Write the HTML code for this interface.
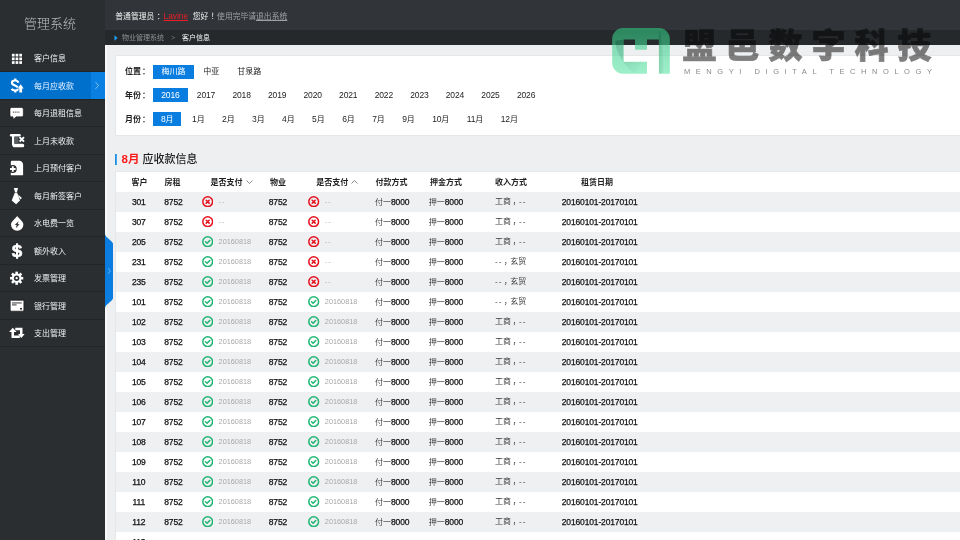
<!DOCTYPE html>
<html lang="zh-CN">
<head>
<meta charset="utf-8">
<title>管理系统</title>
<style>
*{box-sizing:border-box;margin:0;padding:0}
html,body{width:960px;height:540px;overflow:hidden;background:#eeeff1}
#side,#top,#crumb,#filter,#ttl,#tbl,#wm{will-change:transform}
body{font-family:"Liberation Sans","Noto Sans CJK SC",sans-serif;font-size:8px;color:#222;position:relative}
#edge{position:absolute;left:105px;top:45px;width:2px;height:495px;background:#f8f8f9}
#side{position:absolute;left:0;top:0;width:105px;height:540px;background:#2a2e31}
#side h1{position:absolute;left:0;top:0;width:100px;height:45px;line-height:47px;text-align:center;font-size:13px;font-weight:300;color:#b9bdc0}
#menu{position:absolute;left:0;top:44.600px;width:105px;list-style:none}
#menu li{height:27.500px;position:relative;border-bottom:1px solid #222528;color:#f0f0f0;font-size:8px;line-height:28px;padding-left:34px;white-space:nowrap}
#menu li svg.mi{position:absolute;left:0;top:0;width:34px;height:27.500px;fill:#fff}
#menu li svg.ar{position:absolute;left:94.300px;top:8.900px;width:6px;height:9px;z-index:2}
#menu li:nth-child(even){line-height:29.400px}
#menu li:nth-child(even) svg.mi{transform:translateY(.8px)}
#menu li.on{background:#0070cd;color:#e8f3ff}
#menu li.on i{position:absolute;right:0;top:0;width:14.500px;height:26.500px;background:#0a80e2}
#top{position:absolute;left:105px;top:0;width:855px;height:30px;background:#313539;color:#f2f2f2;line-height:32px;padding-left:10.300px;font-size:7.800px;white-space:nowrap}
#top b{font-weight:400}
.pc{position:relative;left:2.500px}
#top .u{color:#ee1c24;text-decoration:underline;text-decoration-thickness:.6px;text-underline-offset:1px;margin:0 2.500px 0 1.500px;font-size:8.300px}
#top .m{color:#9ea2a5;margin-left:1px}
#top .m a{text-decoration:underline;text-decoration-thickness:.6px;text-underline-offset:1px;color:#9ea2a5}
#crumb{position:absolute;left:105px;top:30px;width:855px;height:15px;background:#26292c;color:#8d9194;font-size:7px;line-height:16px;padding-left:17px;white-space:nowrap}
#crumb svg{position:absolute;left:9px;top:5px;width:4px;height:6px}
#crumb .s{margin:0 7px;color:#777b7e}
#crumb .c{color:#f4f4f4}
#filter{position:absolute;left:115px;top:55px;width:860px;height:81px;background:#fff;border:1px solid #e6e7e9}
.frow{position:absolute;left:9px;height:14px;line-height:14.500px;white-space:nowrap;font-size:8px}
.frow label{display:inline-block;width:28.300px;font-weight:700;color:#222}
.frow span{display:inline-block;height:14px;padding:0 8.250px;margin-right:1.300px;color:#1c1c1c}
.frow.yr span{padding:0 8px;margin-right:1.260px}
.frow.mo span{padding:0 7.600px;margin-right:2.250px}
.frow span.on{background:#0a7de0;color:#fff}
.frow i{font-style:normal;font-size:8.500px;letter-spacing:-.15px}
.frow.mo span.on{margin-right:3.400px}
#ttl{position:absolute;left:115px;top:153px;height:13px;padding-left:6.600px;font-size:11px;line-height:12.500px;color:#222;font-weight:500;white-space:nowrap}
#ttl:before{content:"";position:absolute;left:0;top:1px;width:2px;height:10.500px;background:linear-gradient(90deg,#1a8fe8 0,#1a8fe8 60%,#8cc6f2 100%)}
#ttl em{font-style:normal;font-weight:700;color:#fb1a1a;margin-right:3px;font-size:11.500px}
#tbl{position:absolute;left:115px;top:171px;width:860px;height:400px;background:#fff;border:1px solid #e6e7e9}
.th,.tr{position:absolute;left:0;width:860px;height:20px;line-height:20.800px;white-space:nowrap;font-size:8px}
.th{top:0;font-weight:700;color:#222;line-height:21.200px}
.tr{color:#1a1a1a}
.tr.g{background:#eff0f2}
.th span,.tr span{position:absolute;top:0}
.tr i{font-style:normal;font-size:8.500px;letter-spacing:-.15px;color:#111;-webkit-text-stroke:.25px #111}
.tr i.d{font-size:8px;letter-spacing:1px;color:inherit;-webkit-text-stroke:0}
.tr em{font-style:normal;position:relative;left:1.500px}
.c1{left:0;width:45.500px;text-align:center}
.c2{left:40.400px;width:34px;text-align:center}
.c4{left:144.900px;width:34px;text-align:center}
.c3{left:86px}
.c5{left:192.250px}
.c6{left:259px}.c7{left:312.750px}.c8{left:379px}
.c9{left:429.750px;width:108px;text-align:center}
.th .c1{width:46.800px}
.th .c2{left:40.500px;width:32px}
.th .c4{left:145.900px;width:32px}
.th .c3{left:94.500px}.th .c5{left:200.250px}
.th .c6{left:259.500px}.th .c7{left:314px}.th .c8{left:379px}
.th .c9{left:427.100px}
.ic{position:absolute;left:-.1px;top:3.800px;width:11.400px;height:11.400px}
.dt{left:16.600px;color:#a8a8a8;font-size:7.300px}
.dt.no{letter-spacing:1px;color:#b0b0b0}
.tr .c6,.tr .c7,.tr .c8{color:#3c3c3c}
.chev{display:inline-block;width:7px;height:4px;margin-left:3.750px;vertical-align:1px}
.th .c5 .chev{margin-left:3px}
#handle{position:absolute;left:104.500px;top:233.500px;width:8.500px;height:74px}
#wm{position:absolute;left:0;top:0;width:960px;height:100px;pointer-events:none}
#logo{position:absolute;left:612px;top:28.300px;width:58px;height:45.700px;opacity:.62}
#wmc{position:absolute;left:682.500px;top:23px;font-weight:900;font-size:34px;line-height:46px;letter-spacing:9px;color:#000;opacity:.5;-webkit-text-stroke:.7px #000;white-space:nowrap}
#wme{position:absolute;left:684px;top:66px;font-size:7.500px;line-height:11px;letter-spacing:5.560px;color:#8a8a8a;white-space:nowrap}
</style>
</head>
<body>
<div id="edge"></div>
<div id="side">
<h1>管理系统</h1>
<ul id="menu">
<li><svg class="mi" viewBox="0 0 34 27.500"><rect x="11.9" y="8.8" width="2.7" height="2.7"/><rect x="15.6" y="8.8" width="2.7" height="2.7"/><rect x="19.3" y="8.8" width="2.7" height="2.7"/><rect x="11.9" y="12.5" width="2.7" height="2.7"/><rect x="15.6" y="12.5" width="2.7" height="2.7"/><rect x="19.3" y="12.5" width="2.7" height="2.7"/><rect x="11.9" y="16.2" width="2.7" height="2.7"/><rect x="15.6" y="16.2" width="2.7" height="2.7"/><rect x="19.3" y="16.2" width="2.7" height="2.7"/></svg>客户信息</li>
<li class="on"><svg class="mi" viewBox="0 0 34 27.500"><g fill="none" stroke="#fff" stroke-width="2.200"><path d="M15.3 5.700V8"/><path d="M18.400 9.800C17.700 8.200 16.600 7.700 15 7.700C13 7.700 11.900 8.600 11.900 10C11.900 11.400 13 12 15 12.700C16.500 13.300 17.400 13.800 17.800 14.600"/><path d="M11.500 16.100C12.400 17.400 13.600 17.700 15 17.700C16.500 17.700 17.500 17.300 18.200 16.300"/><path d="M15.300 17.700V19.700"/></g><path d="M20.700 11.400L23.700 15.600H22.100V19.700H19.300V15.600H17.700Z"/></svg>每月应收款<i></i><svg class="ar" viewBox="0 0 8 12"><path d="M2 1.500L6 6L2 10.500" fill="none" stroke="#a9d3f7" stroke-width="1"/></svg></li>
<li><svg class="mi" viewBox="0 0 34 27.500"><path d="M11.600 7.500H21.700A1.600 1.600 0 0 1 23.300 9.100V15.200A1.600 1.600 0 0 1 21.700 16.800H16.300L13.400 19.200L12.900 16.800H11.600A1.600 1.600 0 0 1 10 15.200V9.100A1.600 1.600 0 0 1 11.600 7.500Z" stroke="#15181a" stroke-width=".6"/><g fill="#777"><rect x="12.900" y="11.400" width="1.100" height="1.500"/><rect x="14.700" y="11.400" width="1.100" height="1.500"/><rect x="16.500" y="11.400" width="1.100" height="1.500"/><rect x="18.300" y="11.400" width="1.100" height="1.500"/></g></svg>每月退租信息</li>
<li><svg class="mi" viewBox="0 0 34 27.500"><g><rect x="9.900" y="6.300" width="10.800" height="2.500" rx="1.250"/><rect x="12" y="6.300" width="2.300" height="11.500"/><rect x="12.600" y="15.900" width="11.600" height="3.500" rx="1.500"/><rect x="14.700" y="9.100" width="3.800" height="6.500" fill="#5a5d60"/><path d="M19.600 9.300L24 13.900M24 9.300L19.600 13.900" stroke="#fff" stroke-width="1.900" fill="none"/></g></svg>上月未收款</li>
<li><svg class="mi" viewBox="0 0 34 27.500"><path d="M12 5.700H19.600Q23.100 6.400 23.100 10V20.200H10.800V6.900Q10.800 5.700 12 5.700Z"/><circle cx="12.800" cy="14" r="3.900" fill="#2a2e31"/><path d="M10 14H15.600M12.800 11.200V16.800" stroke="#fff" stroke-width="1.900" fill="none"/></svg>上月预付客户</li>
<li><svg class="mi" viewBox="0 0 34 27.500"><path d="M13.800 5.300H18L17 9.300H15Z"/><path d="M14.900 9.700H17.100L20 17.600L16.100 21.500L11.700 17.600Z"/><path d="M18 11.600L21.900 15.200L20.600 16.700L18.900 14.300Z"/></svg>每月新签客户</li>
<li><svg class="mi" viewBox="0 0 34 27.500"><path d="M17.200 6C19 8.600 23.400 11.600 23.400 14.600A6.200 6.200 0 0 1 11 14.600C11 11.600 15.400 8.600 17.200 6Z"/><path d="M18.600 11.200L14.800 14.900H16.700L15.800 18.300L19.600 14.200H17.600Z" fill="#2a2e31"/></svg>水电费一览</li>
<li><svg class="mi" viewBox="0 0 34 27.500"><text x="17.050" y="19.500" style="font:700 16.700px 'Liberation Sans',sans-serif" text-anchor="middle" stroke="#fff" stroke-width=".5">S</text><rect x="16" y="5.500" width="2.100" height="15.500"/></svg>额外收入</li>
<li><svg class="mi" viewBox="0 0 34 27.500"><g transform="translate(16.650 13.200)"><circle r="4.800"/><rect x="-1.300" y="-6.600" width="2.600" height="3.200" transform="rotate(0)"/><rect x="-1.300" y="-6.600" width="2.600" height="3.200" transform="rotate(45)"/><rect x="-1.300" y="-6.600" width="2.600" height="3.200" transform="rotate(90)"/><rect x="-1.300" y="-6.600" width="2.600" height="3.200" transform="rotate(135)"/><rect x="-1.300" y="-6.600" width="2.600" height="3.200" transform="rotate(180)"/><rect x="-1.300" y="-6.600" width="2.600" height="3.200" transform="rotate(225)"/><rect x="-1.300" y="-6.600" width="2.600" height="3.200" transform="rotate(270)"/><rect x="-1.300" y="-6.600" width="2.600" height="3.200" transform="rotate(315)"/><circle r="2.700" fill="#2a2e31"/><circle r="1.150"/></g></svg>发票管理</li>
<li><svg class="mi" viewBox="0 0 34 27.500"><rect x="10.200" y="7.500" width="13.700" height="10.900" rx="1.200" stroke="#15181a" stroke-width=".7"/><rect x="12" y="9.700" width="9.700" height=".9" fill="#222"/><rect x="12" y="11.300" width="4.600" height="1.500" fill="#777"/><circle cx="21" cy="15.900" r="1" fill="#222"/></svg>银行管理</li>
<li><svg class="mi" viewBox="0 0 34 27.500"><path d="M12.800 7.800L16.500 12H14V15.600H19.800V18.100H11.500V12H9.100Z"/><path d="M21.300 18.100L18 14H20V10.300H15.300V7.800H22.500V14H24.700Z"/></svg>支出管理</li>
</ul>
</div>
<div id="top"><b>普通管理员<span class="pc">：</span></b><span class="u">Lavine</span> <b>您好<span class="pc">！</span></b><span class="m">使用完毕请<a>退出系统</a></span></div>
<div id="crumb"><svg viewBox="0 0 4 6"><path d="M.5 .3L3.600 3L.5 5.700Z" fill="#1aa3ff"/></svg>物业管理系统<span class="s">&gt;</span><span class="c">客户信息</span></div>
<div id="filter">
<div class="frow" style="top:9px"><label>位置<span class="pc" style="padding:0;margin:0;left:1px">：</span></label><span class="on">梅川路</span><span>中亚</span><span>甘泉路</span></div>
<div class="frow yr" style="top:32px"><label>年份<span class="pc" style="padding:0;margin:0;left:1px">：</span></label><span class="on"><i>2016</i></span><span><i>2017</i></span><span><i>2018</i></span><span><i>2019</i></span><span><i>2020</i></span><span><i>2021</i></span><span><i>2022</i></span><span><i>2023</i></span><span><i>2024</i></span><span><i>2025</i></span><span><i>2026</i></span></div>
<div class="frow mo" style="top:56px"><label>月份<span class="pc" style="padding:0;margin:0;left:1px">：</span></label><span class="on"><i>8</i>月</span><span><i>1</i>月</span><span><i>2</i>月</span><span><i>3</i>月</span><span><i>4</i>月</span><span><i>5</i>月</span><span><i>6</i>月</span><span><i>7</i>月</span><span><i>9</i>月</span><span><i>10</i>月</span><span><i>11</i>月</span><span><i>12</i>月</span></div>
</div>
<div id="ttl"><em>8月</em>应收款信息</div>
<div id="tbl">
<div class="th"><span class="c1">客户</span><span class="c2">房租</span><span class="c3">是否支付<svg class="chev" viewBox="0 0 14 8"><path d="M1 1l6 6 6-6" fill="none" stroke="#555" stroke-width="1.400"/></svg></span><span class="c4">物业</span><span class="c5">是否支付<svg class="chev" viewBox="0 0 14 8"><path d="M1 7l6-6 6 6" fill="none" stroke="#555" stroke-width="1.400"/></svg></span><span class="c6">付款方式</span><span class="c7">押金方式</span><span class="c8">收入方式</span><span class="c9">租赁日期</span></div>
<div style="top:20px" class="tr g"><span class="c1"><i>301</i></span><span class="c2"><i>8752</i></span><span class="c3"><svg class="ic" viewBox="0 0 21 21"><circle cx="10.5" cy="10.5" r="9" fill="none" stroke="#e6121f" stroke-width="2.800"/><path d="M7.800 7.800l5.400 5.400M13.200 7.800l-5.400 5.400" fill="none" stroke="#e6121f" stroke-width="2.900" stroke-linecap="round"/></svg><span class="dt no">--</span></span><span class="c4"><i>8752</i></span><span class="c5"><svg class="ic" viewBox="0 0 21 21"><circle cx="10.5" cy="10.5" r="9" fill="none" stroke="#e6121f" stroke-width="2.800"/><path d="M7.800 7.800l5.400 5.400M13.200 7.800l-5.400 5.400" fill="none" stroke="#e6121f" stroke-width="2.900" stroke-linecap="round"/></svg><span class="dt no">--</span></span><span class="c6">付一<i>8000</i></span><span class="c7">押一<i>8000</i></span><span class="c8">工商<em>，</em><i class="d">--</i></span><span class="c9"><i>20160101-20170101</i></span></div>
<div style="top:40px" class="tr"><span class="c1"><i>307</i></span><span class="c2"><i>8752</i></span><span class="c3"><svg class="ic" viewBox="0 0 21 21"><circle cx="10.5" cy="10.5" r="9" fill="none" stroke="#e6121f" stroke-width="2.800"/><path d="M7.800 7.800l5.400 5.400M13.200 7.800l-5.400 5.400" fill="none" stroke="#e6121f" stroke-width="2.900" stroke-linecap="round"/></svg><span class="dt no">--</span></span><span class="c4"><i>8752</i></span><span class="c5"><svg class="ic" viewBox="0 0 21 21"><circle cx="10.5" cy="10.5" r="9" fill="none" stroke="#e6121f" stroke-width="2.800"/><path d="M7.800 7.800l5.400 5.400M13.200 7.800l-5.400 5.400" fill="none" stroke="#e6121f" stroke-width="2.900" stroke-linecap="round"/></svg><span class="dt no">--</span></span><span class="c6">付一<i>8000</i></span><span class="c7">押一<i>8000</i></span><span class="c8">工商<em>，</em><i class="d">--</i></span><span class="c9"><i>20160101-20170101</i></span></div>
<div style="top:60px" class="tr g"><span class="c1"><i>205</i></span><span class="c2"><i>8752</i></span><span class="c3"><svg class="ic" viewBox="0 0 21 21"><circle cx="10.5" cy="10.5" r="9" fill="none" stroke="#21b573" stroke-width="2.800"/><path d="M6.500 10.700l2.900 2.700 4.900-5.100" fill="none" stroke="#21b573" stroke-width="2.800" stroke-linecap="round" stroke-linejoin="round"/></svg><span class="dt">20160818</span></span><span class="c4"><i>8752</i></span><span class="c5"><svg class="ic" viewBox="0 0 21 21"><circle cx="10.5" cy="10.5" r="9" fill="none" stroke="#e6121f" stroke-width="2.800"/><path d="M7.800 7.800l5.400 5.400M13.200 7.800l-5.400 5.400" fill="none" stroke="#e6121f" stroke-width="2.900" stroke-linecap="round"/></svg><span class="dt no">--</span></span><span class="c6">付一<i>8000</i></span><span class="c7">押一<i>8000</i></span><span class="c8">工商<em>，</em><i class="d">--</i></span><span class="c9"><i>20160101-20170101</i></span></div>
<div style="top:80px" class="tr"><span class="c1"><i>231</i></span><span class="c2"><i>8752</i></span><span class="c3"><svg class="ic" viewBox="0 0 21 21"><circle cx="10.5" cy="10.5" r="9" fill="none" stroke="#21b573" stroke-width="2.800"/><path d="M6.500 10.700l2.900 2.700 4.900-5.100" fill="none" stroke="#21b573" stroke-width="2.800" stroke-linecap="round" stroke-linejoin="round"/></svg><span class="dt">20160818</span></span><span class="c4"><i>8752</i></span><span class="c5"><svg class="ic" viewBox="0 0 21 21"><circle cx="10.5" cy="10.5" r="9" fill="none" stroke="#e6121f" stroke-width="2.800"/><path d="M7.800 7.800l5.400 5.400M13.200 7.800l-5.400 5.400" fill="none" stroke="#e6121f" stroke-width="2.900" stroke-linecap="round"/></svg><span class="dt no">--</span></span><span class="c6">付一<i>8000</i></span><span class="c7">押一<i>8000</i></span><span class="c8"><i class="d">--</i><em>，</em>玄贸</span><span class="c9"><i>20160101-20170101</i></span></div>
<div style="top:100px" class="tr g"><span class="c1"><i>235</i></span><span class="c2"><i>8752</i></span><span class="c3"><svg class="ic" viewBox="0 0 21 21"><circle cx="10.5" cy="10.5" r="9" fill="none" stroke="#21b573" stroke-width="2.800"/><path d="M6.500 10.700l2.900 2.700 4.900-5.100" fill="none" stroke="#21b573" stroke-width="2.800" stroke-linecap="round" stroke-linejoin="round"/></svg><span class="dt">20160818</span></span><span class="c4"><i>8752</i></span><span class="c5"><svg class="ic" viewBox="0 0 21 21"><circle cx="10.5" cy="10.5" r="9" fill="none" stroke="#e6121f" stroke-width="2.800"/><path d="M7.800 7.800l5.400 5.400M13.200 7.800l-5.400 5.400" fill="none" stroke="#e6121f" stroke-width="2.900" stroke-linecap="round"/></svg><span class="dt no">--</span></span><span class="c6">付一<i>8000</i></span><span class="c7">押一<i>8000</i></span><span class="c8"><i class="d">--</i><em>，</em>玄贸</span><span class="c9"><i>20160101-20170101</i></span></div>
<div style="top:120px" class="tr"><span class="c1"><i>101</i></span><span class="c2"><i>8752</i></span><span class="c3"><svg class="ic" viewBox="0 0 21 21"><circle cx="10.5" cy="10.5" r="9" fill="none" stroke="#21b573" stroke-width="2.800"/><path d="M6.500 10.700l2.900 2.700 4.900-5.100" fill="none" stroke="#21b573" stroke-width="2.800" stroke-linecap="round" stroke-linejoin="round"/></svg><span class="dt">20160818</span></span><span class="c4"><i>8752</i></span><span class="c5"><svg class="ic" viewBox="0 0 21 21"><circle cx="10.5" cy="10.5" r="9" fill="none" stroke="#21b573" stroke-width="2.800"/><path d="M6.500 10.700l2.900 2.700 4.900-5.100" fill="none" stroke="#21b573" stroke-width="2.800" stroke-linecap="round" stroke-linejoin="round"/></svg><span class="dt">20160818</span></span><span class="c6">付一<i>8000</i></span><span class="c7">押一<i>8000</i></span><span class="c8"><i class="d">--</i><em>，</em>玄贸</span><span class="c9"><i>20160101-20170101</i></span></div>
<div style="top:140px" class="tr g"><span class="c1"><i>102</i></span><span class="c2"><i>8752</i></span><span class="c3"><svg class="ic" viewBox="0 0 21 21"><circle cx="10.5" cy="10.5" r="9" fill="none" stroke="#21b573" stroke-width="2.800"/><path d="M6.500 10.700l2.900 2.700 4.900-5.100" fill="none" stroke="#21b573" stroke-width="2.800" stroke-linecap="round" stroke-linejoin="round"/></svg><span class="dt">20160818</span></span><span class="c4"><i>8752</i></span><span class="c5"><svg class="ic" viewBox="0 0 21 21"><circle cx="10.5" cy="10.5" r="9" fill="none" stroke="#21b573" stroke-width="2.800"/><path d="M6.500 10.700l2.900 2.700 4.900-5.100" fill="none" stroke="#21b573" stroke-width="2.800" stroke-linecap="round" stroke-linejoin="round"/></svg><span class="dt">20160818</span></span><span class="c6">付一<i>8000</i></span><span class="c7">押一<i>8000</i></span><span class="c8">工商<em>，</em><i class="d">--</i></span><span class="c9"><i>20160101-20170101</i></span></div>
<div style="top:160px" class="tr"><span class="c1"><i>103</i></span><span class="c2"><i>8752</i></span><span class="c3"><svg class="ic" viewBox="0 0 21 21"><circle cx="10.5" cy="10.5" r="9" fill="none" stroke="#21b573" stroke-width="2.800"/><path d="M6.500 10.700l2.900 2.700 4.900-5.100" fill="none" stroke="#21b573" stroke-width="2.800" stroke-linecap="round" stroke-linejoin="round"/></svg><span class="dt">20160818</span></span><span class="c4"><i>8752</i></span><span class="c5"><svg class="ic" viewBox="0 0 21 21"><circle cx="10.5" cy="10.5" r="9" fill="none" stroke="#21b573" stroke-width="2.800"/><path d="M6.500 10.700l2.900 2.700 4.900-5.100" fill="none" stroke="#21b573" stroke-width="2.800" stroke-linecap="round" stroke-linejoin="round"/></svg><span class="dt">20160818</span></span><span class="c6">付一<i>8000</i></span><span class="c7">押一<i>8000</i></span><span class="c8">工商<em>，</em><i class="d">--</i></span><span class="c9"><i>20160101-20170101</i></span></div>
<div style="top:180px" class="tr g"><span class="c1"><i>104</i></span><span class="c2"><i>8752</i></span><span class="c3"><svg class="ic" viewBox="0 0 21 21"><circle cx="10.5" cy="10.5" r="9" fill="none" stroke="#21b573" stroke-width="2.800"/><path d="M6.500 10.700l2.900 2.700 4.900-5.100" fill="none" stroke="#21b573" stroke-width="2.800" stroke-linecap="round" stroke-linejoin="round"/></svg><span class="dt">20160818</span></span><span class="c4"><i>8752</i></span><span class="c5"><svg class="ic" viewBox="0 0 21 21"><circle cx="10.5" cy="10.5" r="9" fill="none" stroke="#21b573" stroke-width="2.800"/><path d="M6.500 10.700l2.900 2.700 4.900-5.100" fill="none" stroke="#21b573" stroke-width="2.800" stroke-linecap="round" stroke-linejoin="round"/></svg><span class="dt">20160818</span></span><span class="c6">付一<i>8000</i></span><span class="c7">押一<i>8000</i></span><span class="c8">工商<em>，</em><i class="d">--</i></span><span class="c9"><i>20160101-20170101</i></span></div>
<div style="top:200px" class="tr"><span class="c1"><i>105</i></span><span class="c2"><i>8752</i></span><span class="c3"><svg class="ic" viewBox="0 0 21 21"><circle cx="10.5" cy="10.5" r="9" fill="none" stroke="#21b573" stroke-width="2.800"/><path d="M6.500 10.700l2.900 2.700 4.900-5.100" fill="none" stroke="#21b573" stroke-width="2.800" stroke-linecap="round" stroke-linejoin="round"/></svg><span class="dt">20160818</span></span><span class="c4"><i>8752</i></span><span class="c5"><svg class="ic" viewBox="0 0 21 21"><circle cx="10.5" cy="10.5" r="9" fill="none" stroke="#21b573" stroke-width="2.800"/><path d="M6.500 10.700l2.900 2.700 4.900-5.100" fill="none" stroke="#21b573" stroke-width="2.800" stroke-linecap="round" stroke-linejoin="round"/></svg><span class="dt">20160818</span></span><span class="c6">付一<i>8000</i></span><span class="c7">押一<i>8000</i></span><span class="c8">工商<em>，</em><i class="d">--</i></span><span class="c9"><i>20160101-20170101</i></span></div>
<div style="top:220px" class="tr g"><span class="c1"><i>106</i></span><span class="c2"><i>8752</i></span><span class="c3"><svg class="ic" viewBox="0 0 21 21"><circle cx="10.5" cy="10.5" r="9" fill="none" stroke="#21b573" stroke-width="2.800"/><path d="M6.500 10.700l2.900 2.700 4.900-5.100" fill="none" stroke="#21b573" stroke-width="2.800" stroke-linecap="round" stroke-linejoin="round"/></svg><span class="dt">20160818</span></span><span class="c4"><i>8752</i></span><span class="c5"><svg class="ic" viewBox="0 0 21 21"><circle cx="10.5" cy="10.5" r="9" fill="none" stroke="#21b573" stroke-width="2.800"/><path d="M6.500 10.700l2.900 2.700 4.900-5.100" fill="none" stroke="#21b573" stroke-width="2.800" stroke-linecap="round" stroke-linejoin="round"/></svg><span class="dt">20160818</span></span><span class="c6">付一<i>8000</i></span><span class="c7">押一<i>8000</i></span><span class="c8">工商<em>，</em><i class="d">--</i></span><span class="c9"><i>20160101-20170101</i></span></div>
<div style="top:240px" class="tr"><span class="c1"><i>107</i></span><span class="c2"><i>8752</i></span><span class="c3"><svg class="ic" viewBox="0 0 21 21"><circle cx="10.5" cy="10.5" r="9" fill="none" stroke="#21b573" stroke-width="2.800"/><path d="M6.500 10.700l2.900 2.700 4.900-5.100" fill="none" stroke="#21b573" stroke-width="2.800" stroke-linecap="round" stroke-linejoin="round"/></svg><span class="dt">20160818</span></span><span class="c4"><i>8752</i></span><span class="c5"><svg class="ic" viewBox="0 0 21 21"><circle cx="10.5" cy="10.5" r="9" fill="none" stroke="#21b573" stroke-width="2.800"/><path d="M6.500 10.700l2.900 2.700 4.900-5.100" fill="none" stroke="#21b573" stroke-width="2.800" stroke-linecap="round" stroke-linejoin="round"/></svg><span class="dt">20160818</span></span><span class="c6">付一<i>8000</i></span><span class="c7">押一<i>8000</i></span><span class="c8">工商<em>，</em><i class="d">--</i></span><span class="c9"><i>20160101-20170101</i></span></div>
<div style="top:260px" class="tr g"><span class="c1"><i>108</i></span><span class="c2"><i>8752</i></span><span class="c3"><svg class="ic" viewBox="0 0 21 21"><circle cx="10.5" cy="10.5" r="9" fill="none" stroke="#21b573" stroke-width="2.800"/><path d="M6.500 10.700l2.900 2.700 4.900-5.100" fill="none" stroke="#21b573" stroke-width="2.800" stroke-linecap="round" stroke-linejoin="round"/></svg><span class="dt">20160818</span></span><span class="c4"><i>8752</i></span><span class="c5"><svg class="ic" viewBox="0 0 21 21"><circle cx="10.5" cy="10.5" r="9" fill="none" stroke="#21b573" stroke-width="2.800"/><path d="M6.500 10.700l2.900 2.700 4.900-5.100" fill="none" stroke="#21b573" stroke-width="2.800" stroke-linecap="round" stroke-linejoin="round"/></svg><span class="dt">20160818</span></span><span class="c6">付一<i>8000</i></span><span class="c7">押一<i>8000</i></span><span class="c8">工商<em>，</em><i class="d">--</i></span><span class="c9"><i>20160101-20170101</i></span></div>
<div style="top:280px" class="tr"><span class="c1"><i>109</i></span><span class="c2"><i>8752</i></span><span class="c3"><svg class="ic" viewBox="0 0 21 21"><circle cx="10.5" cy="10.5" r="9" fill="none" stroke="#21b573" stroke-width="2.800"/><path d="M6.500 10.700l2.900 2.700 4.900-5.100" fill="none" stroke="#21b573" stroke-width="2.800" stroke-linecap="round" stroke-linejoin="round"/></svg><span class="dt">20160818</span></span><span class="c4"><i>8752</i></span><span class="c5"><svg class="ic" viewBox="0 0 21 21"><circle cx="10.5" cy="10.5" r="9" fill="none" stroke="#21b573" stroke-width="2.800"/><path d="M6.500 10.700l2.900 2.700 4.900-5.100" fill="none" stroke="#21b573" stroke-width="2.800" stroke-linecap="round" stroke-linejoin="round"/></svg><span class="dt">20160818</span></span><span class="c6">付一<i>8000</i></span><span class="c7">押一<i>8000</i></span><span class="c8">工商<em>，</em><i class="d">--</i></span><span class="c9"><i>20160101-20170101</i></span></div>
<div style="top:300px" class="tr g"><span class="c1"><i>110</i></span><span class="c2"><i>8752</i></span><span class="c3"><svg class="ic" viewBox="0 0 21 21"><circle cx="10.5" cy="10.5" r="9" fill="none" stroke="#21b573" stroke-width="2.800"/><path d="M6.500 10.700l2.900 2.700 4.900-5.100" fill="none" stroke="#21b573" stroke-width="2.800" stroke-linecap="round" stroke-linejoin="round"/></svg><span class="dt">20160818</span></span><span class="c4"><i>8752</i></span><span class="c5"><svg class="ic" viewBox="0 0 21 21"><circle cx="10.5" cy="10.5" r="9" fill="none" stroke="#21b573" stroke-width="2.800"/><path d="M6.500 10.700l2.900 2.700 4.900-5.100" fill="none" stroke="#21b573" stroke-width="2.800" stroke-linecap="round" stroke-linejoin="round"/></svg><span class="dt">20160818</span></span><span class="c6">付一<i>8000</i></span><span class="c7">押一<i>8000</i></span><span class="c8">工商<em>，</em><i class="d">--</i></span><span class="c9"><i>20160101-20170101</i></span></div>
<div style="top:320px" class="tr"><span class="c1"><i>111</i></span><span class="c2"><i>8752</i></span><span class="c3"><svg class="ic" viewBox="0 0 21 21"><circle cx="10.5" cy="10.5" r="9" fill="none" stroke="#21b573" stroke-width="2.800"/><path d="M6.500 10.700l2.900 2.700 4.900-5.100" fill="none" stroke="#21b573" stroke-width="2.800" stroke-linecap="round" stroke-linejoin="round"/></svg><span class="dt">20160818</span></span><span class="c4"><i>8752</i></span><span class="c5"><svg class="ic" viewBox="0 0 21 21"><circle cx="10.5" cy="10.5" r="9" fill="none" stroke="#21b573" stroke-width="2.800"/><path d="M6.500 10.700l2.900 2.700 4.900-5.100" fill="none" stroke="#21b573" stroke-width="2.800" stroke-linecap="round" stroke-linejoin="round"/></svg><span class="dt">20160818</span></span><span class="c6">付一<i>8000</i></span><span class="c7">押一<i>8000</i></span><span class="c8">工商<em>，</em><i class="d">--</i></span><span class="c9"><i>20160101-20170101</i></span></div>
<div style="top:340px" class="tr g"><span class="c1"><i>112</i></span><span class="c2"><i>8752</i></span><span class="c3"><svg class="ic" viewBox="0 0 21 21"><circle cx="10.5" cy="10.5" r="9" fill="none" stroke="#21b573" stroke-width="2.800"/><path d="M6.500 10.700l2.900 2.700 4.900-5.100" fill="none" stroke="#21b573" stroke-width="2.800" stroke-linecap="round" stroke-linejoin="round"/></svg><span class="dt">20160818</span></span><span class="c4"><i>8752</i></span><span class="c5"><svg class="ic" viewBox="0 0 21 21"><circle cx="10.5" cy="10.5" r="9" fill="none" stroke="#21b573" stroke-width="2.800"/><path d="M6.500 10.700l2.900 2.700 4.900-5.100" fill="none" stroke="#21b573" stroke-width="2.800" stroke-linecap="round" stroke-linejoin="round"/></svg><span class="dt">20160818</span></span><span class="c6">付一<i>8000</i></span><span class="c7">押一<i>8000</i></span><span class="c8">工商<em>，</em><i class="d">--</i></span><span class="c9"><i>20160101-20170101</i></span></div>
<div style="top:360px" class="tr"><span class="c1"><i>113</i></span></div>
</div>
<svg id="handle" viewBox="0 0 17 148"><path d="M0 0C2 10 17 12 17 24v100c0 12-15 14-17 24z" fill="#0b7de0"/><path d="M6.500 68.500l4.200 5.500-4.200 5.500" fill="none" stroke="#8cc4f2" stroke-width="1.400"/></svg>
<div id="wm">
<svg id="logo" viewBox="0 0 116 92"><defs><linearGradient id="lg" x1="0" y1="0" x2="0" y2="1"><stop offset="0" stop-color="#2fc27f"/><stop offset="1" stop-color="#62e6aa"/></linearGradient><linearGradient id="l2" x1="0" y1="0" x2="1" y2="1"><stop offset="0" stop-color="#0b7a4a" stop-opacity=".55"/><stop offset="1" stop-color="#0b7a4a" stop-opacity="0"/></linearGradient><linearGradient id="l3" x1="0" y1="0" x2="1" y2="0"><stop offset="0" stop-color="#0b7a4a" stop-opacity=".4"/><stop offset="1" stop-color="#0b7a4a" stop-opacity="0"/></linearGradient></defs><path d="M22 0H94A22 22 0 0 1 116 22V92H94V23H70V44H46V23H23V68H70V92H22A22 22 0 0 1 0 70V22A22 22 0 0 1 22 0Z" fill="url(#lg)"/><clipPath id="lc"><path d="M22 0H94A22 22 0 0 1 116 22V92H94V23H70V44H46V23H23V68H70V92H22A22 22 0 0 1 0 70V22A22 22 0 0 1 22 0Z"/></clipPath><g clip-path="url(#lc)"><path d="M23 23L6 26Q10 64 46 92L60 68H23Z" fill="url(#l2)"/><path d="M94 4Q100 14 106 92H94Z" fill="url(#l3)"/></g></svg>
<div id="wmc">盟邑数字科技</div>
<div id="wme">MENGYI DIGITAL TECHNOLOGY</div>
</div>
</body>
</html>
